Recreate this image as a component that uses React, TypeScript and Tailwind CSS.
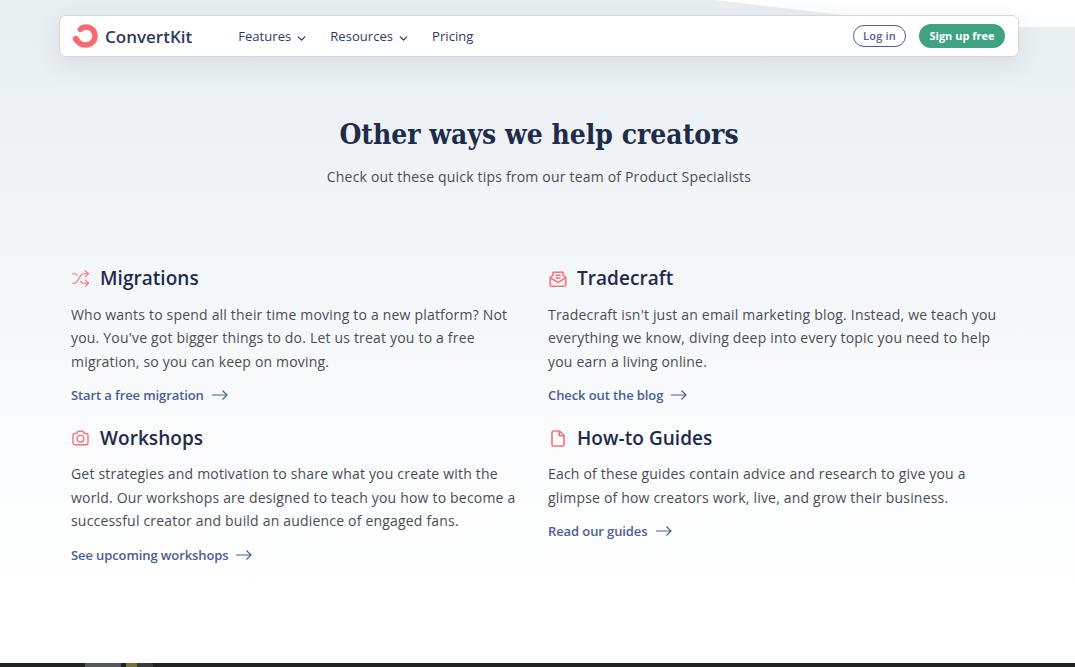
import { ChevronDown, Shuffle } from 'lucide-react';
import type { ReactNode } from 'react';

const SANS = 'font-["Open_Sans",sans-serif]';

function Logo() {
  return (
    <div className="flex items-center gap-[6px]">
      <svg width="27" height="24" viewBox="0 0 27 24" fill="none">
        <path d="M8.4 5.4C9.8 3.8 11.8 3 14 3c5 0 9 3.9 9 8.9s-4 9.1-9.2 9.1c-4.4 0-8-2.4-9.8-6.4" stroke="#fb6970" strokeWidth="5.6" strokeLinecap="round" />
        <path d="M.8 13.2c3-.4 5.6.4 7.4 2.8l-3.8 3.8L.8 16z" fill="#fb6970" />
      </svg>
      <span className="text-[17px] font-semibold leading-none text-[#2b3a60]">ConvertKit</span>
    </div>
  );
}

function NavLink({ label, caret }: { label: string; caret?: boolean }) {
  return (
    <a className="flex items-center gap-[4px] text-[13px] font-medium tracking-[0.05px] text-[#2e3c62]">
      {label}
      {caret && <ChevronDown size={13} strokeWidth={2.4} className="mt-[3px]" />}
    </a>
  );
}

function LongArrow() {
  return (
    <svg width="16" height="10" viewBox="0 0 16 10" fill="none" stroke="currentColor" strokeWidth="1.2">
      <path d="M0 5h15M10.5 .5 15 5l-4.5 4.5" />
    </svg>
  );
}

function Card({ icon, title, link, children }: { icon: ReactNode; title: string; link: string; children: ReactNode }) {
  return (
    <div>
      <div className="flex h-[27px] items-center">
        <div className="flex w-[29px] shrink-0 items-center text-[#fb6f78]">{icon}</div>
        <h3 className="text-[19px] font-semibold leading-[27px] tracking-[0.05px] text-[#1f2b4a]">{title}</h3>
      </div>
      <p className="mt-[10.75px] text-[14px] leading-[23.5px] tracking-[0.19px] text-[#4a4d55]">{children}</p>
      <a className="mt-[9.75px] flex items-center gap-[8px] text-[13px] font-semibold leading-[24px] tracking-[-0.1px] text-[#4a5f94]">
        {link}
        <LongArrow />
      </a>
    </div>
  );
}

export default function App() {
  return (
    <div className={`relative flex h-[667px] flex-col overflow-hidden bg-gradient-to-b from-[#e8edf0] via-[#f2f6f8] via-35% to-white to-[90%] ${SANS}`}>
      {/* white wedge behind the nav, top right */}
      <svg className="absolute right-0 top-0" width="360" height="30" viewBox="0 0 360 30">
        <path d="M0 0L128 15L230 27H360V0Z" fill="#ffffff" />
      </svg>

      <div className="relative ml-[59px] mt-[15px] flex h-[42px] w-[960px] items-center rounded-[7px] border border-[#d3d8de] bg-white pl-[12px] pr-[13px] shadow-[0_8px_24px_rgba(50,70,90,0.1)]">
        <Logo />
        <nav className="ml-[46px] mt-[1px] flex items-center gap-[22px]">
          <NavLink label="Features" caret />
          <NavLink label="Resources" caret />
          <NavLink label="Pricing" />
        </nav>
        <div className="ml-auto flex items-center gap-[13px]">
          <a className="flex h-[22px] w-[53px] items-center justify-center rounded-full border border-[#4a5f94] text-[11px] font-semibold tracking-[0.2px] text-[#4a5f94]">
            Log in
          </a>
          <a className="flex h-[24px] w-[86px] items-center justify-center rounded-full bg-[#3fa283] text-[11px] font-bold text-white">
            Sign up free
          </a>
        </div>
      </div>

      <div className="relative mt-[60px] pl-[3px] text-center">
        <h1 className="font-['DejaVu_Serif_Condensed','DejaVu_Serif',serif] text-[28px] font-bold leading-[36px] text-[#1f2b4a]">Other ways we help creators</h1>
        <p className="mt-[13px] text-[14px] leading-[22px] tracking-[0.19px] text-[#4a4d55]">
          Check out these quick tips from our team of Product Specialists
        </p>
      </div>

      <div className="relative ml-[71px] mt-[77px] grid grid-cols-[450px_450px] items-start gap-x-[27px] gap-y-[17.5px]">
        <Card icon={<Shuffle size={19} strokeWidth={1.4} />} title="Migrations" link="Start a free migration">
          Who wants to spend all their time moving to a new platform? Not you. You've got bigger things to do. Let us treat you to a free migration, so you can keep on moving.
        </Card>
        <Card
          icon={
            <svg width="18" height="16" viewBox="0 0 18 16" fill="none" stroke="currentColor" strokeWidth="1.5" strokeLinejoin="round" className="ml-px">
              <path d="M1.2 6.4 4 4.4V1.2h10v3.2l2.8 2V14a1.2 1.2 0 0 1-1.2 1.2H2.4A1.2 1.2 0 0 1 1.2 14z" />
              <path d="M1.4 7 9 11.4 16.6 7M6.4 4.2h5.2M6.4 7h5.2" />
            </svg>
          }
          title="Tradecraft"
          link="Check out the blog"
        >
          Tradecraft isn't just an email marketing blog. Instead, we teach you everything we know, diving deep into every topic you need to help you earn a living online.
        </Card>
        <Card
          icon={
            <svg width="17" height="16" viewBox="0 0 17 16" fill="none" stroke="currentColor" strokeWidth="1.4" strokeLinejoin="round" className="ml-[1px]">
              <path d="M1 5.2A1.7 1.7 0 0 1 2.7 3.5h2.2L6 1.2h5l1.1 2.3h2.2A1.7 1.7 0 0 1 16 5.2v7.6a2 2 0 0 1-2 2H3a2 2 0 0 1-2-2z" />
              <circle cx="8.5" cy="8.8" r="3.4" />
            </svg>
          }
          title="Workshops"
          link="See upcoming workshops"
        >
          Get strategies and motivation to share what you create with the world. Our workshops are designed to teach you how to become a successful creator and build an audience of engaged fans.
        </Card>
        <Card
          icon={
            <svg width="14" height="17" viewBox="0 0 14 17" fill="none" stroke="currentColor" strokeWidth="1.6" strokeLinejoin="round" className="ml-[3px]">
              <path d="M2.6 1h5.9L13 5.5v8.9a1.6 1.6 0 0 1-1.6 1.6H2.6A1.6 1.6 0 0 1 1 14.4V2.6A1.6 1.6 0 0 1 2.6 1z" />
              <path d="M8.2 1v4.8H13" />
            </svg>
          }
          title="How-to Guides"
          link="Read our guides"
        >
          Each of these guides contain advice and research to give you a glimpse of how creators work, live, and grow their business.
        </Card>
      </div>

      <div className="mt-auto flex h-[4px] shrink-0 bg-[#202226]">
        <div className="ml-[85px] w-[36px] bg-[#55575b]" />
        <div className="ml-[5px] w-[11px] bg-[#76752f]" />
        <div className="w-[16px] bg-[#3a3b40]" />
      </div>
    </div>
  );
}
